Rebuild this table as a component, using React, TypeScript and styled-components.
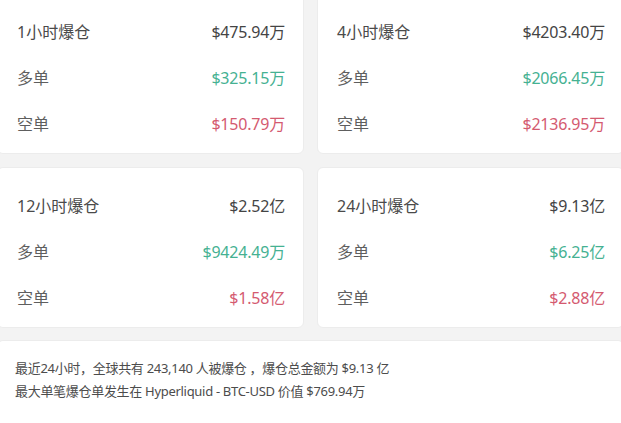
import styled, { createGlobalStyle } from "styled-components";

const Global = createGlobalStyle`
  html, body {
    margin: 0;
    padding: 0;
    background: #f3f3f3;
    overflow: hidden;
  }
  body {
    font-family: "Noto Sans", "Noto Sans CJK SC", sans-serif;
  }
`;

type Stat = { title: string; total: string; long: string; short: string };

const stats: Stat[] = [
  { title: "1小时爆仓", total: "$475.94万", long: "$325.15万", short: "$150.79万" },
  { title: "4小时爆仓", total: "$4203.40万", long: "$2066.45万", short: "$2136.95万" },
  { title: "12小时爆仓", total: "$2.52亿", long: "$9424.49万", short: "$1.58亿" },
  { title: "24小时爆仓", total: "$9.13亿", long: "$6.25亿", short: "$2.88亿" },
];

export default function App() {
  return (
    <>
      <Global />
      <Page>
        <Grid>
          {stats.map((s) => (
            <Card key={s.title}>
              <Line>
                <Label $head>{s.title}</Label>
                <Value $tone="total">{s.total}</Value>
              </Line>
              <Line>
                <Label>多单</Label>
                <Value $tone="long">{s.long}</Value>
              </Line>
              <Line>
                <Label>空单</Label>
                <Value $tone="short">{s.short}</Value>
              </Line>
            </Card>
          ))}
        </Grid>
        <Summary>
          <p>最近24小时，全球共有 243,140 人被爆仓 ，爆仓总金额为 $9.13 亿</p>
          <p>最大单笔爆仓单发生在 Hyperliquid - BTC-USD 价值 $769.94万</p>
        </Summary>
      </Page>
    </>
  );
}

const Page = styled.div`
  width: 627px;
  margin: -7px 0 0 -3px;
  display: flex;
  flex-direction: column;
  gap: 12px;
`;

const Grid = styled.div`
  display: grid;
  grid-template-columns: 307px 307px;
  column-gap: 13px;
  row-gap: 13px;
`;

const Card = styled.div`
  background: #fff;
  border: 1px solid #ececec;
  border-radius: 6px;
  padding: 14px 18px 7px 19px;
  height: 161px;
  box-sizing: border-box;
  display: flex;
  flex-direction: column;
`;

const Line = styled.div`
  height: 46px;
  display: flex;
  align-items: center;
  justify-content: space-between;
  font-size: 16px;
`;

const Label = styled.span<{ $head?: boolean }>`
  color: ${(p) => (p.$head ? "#4a4a4a" : "#5e5e5e")};
`;

const tones: Record<string, string> = {
  total: "#444444",
  long: "#45b192",
  short: "#d45a70",
};

const Value = styled.span<{ $tone: string }>`
  color: ${(p) => tones[p.$tone]};
  letter-spacing: -0.2px;
`;

const Summary = styled.div`
  background: #fff;
  border: 1px solid #ececec;
  border-radius: 6px;
  padding: 16px 17px 30px;
  font-size: 13px;
  letter-spacing: -0.3px;
  color: #4c4c4c;
  p {
    margin: 0;
    line-height: 23px;
  }
`;
